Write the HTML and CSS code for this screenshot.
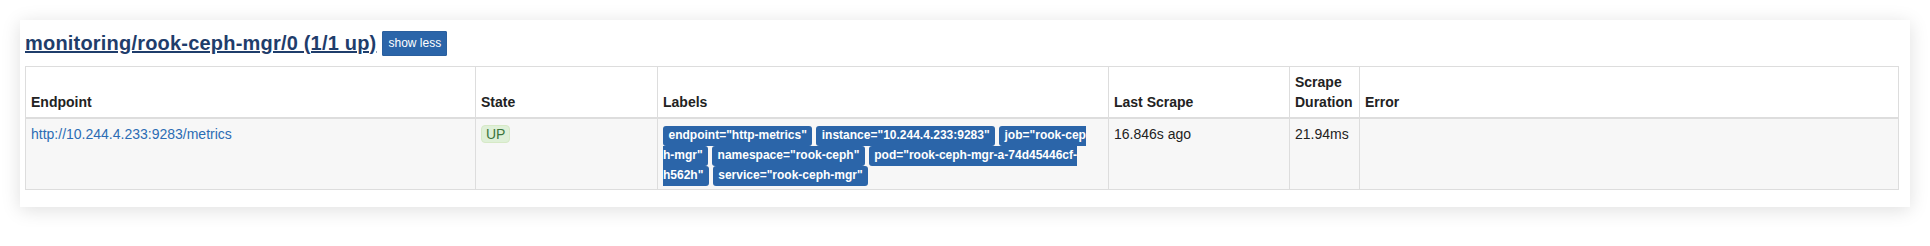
FILE: index.html
```html
<!DOCTYPE html>
<html lang="en">
<head>
    <meta charset="UTF-8">
    <title>Targets</title>
    <link rel="stylesheet" href="styles.css">
</head>
<body>
    <div class="job-card">
        <h2 class="job-title">
            <a href="#job-monitoring/rook-ceph-mgr/0" class="job-link">monitoring/rook-ceph-mgr/0 (1/1 up)</a>
            <button class="btn-toggle">show less</button>
        </h2>
        <table class="targets">
            <colgroup>
                <col class="col-endpoint">
                <col class="col-state">
                <col class="col-labels">
                <col class="col-scrape">
                <col class="col-duration">
                <col>
            </colgroup>
            <thead>
                <tr>
                    <th>Endpoint</th>
                    <th>State</th>
                    <th>Labels</th>
                    <th>Last Scrape</th>
                    <th>Scrape Duration</th>
                    <th>Error</th>
                </tr>
            </thead>
            <tbody>
                <tr>
                    <td><a href="#" class="endpoint">http://10.244.4.233:9283/metrics</a></td>
                    <td><span class="state-up">UP</span></td>
                    <td class="labels">
                        <span class="label">endpoint="http-metrics"</span>
                        <span class="label">instance="10.244.4.233:9283"</span>
                        <span class="label">job="rook-ceph-mgr"</span>
                        <span class="label">namespace="rook-ceph"</span>
                        <span class="label">pod="rook-ceph-mgr-a-74d45446cf-<br>h562h"</span>
                        <span class="label">service="rook-ceph-mgr"</span>
                    </td>
                    <td>16.846s ago</td>
                    <td>21.94ms</td>
                    <td></td>
                </tr>
            </tbody>
        </table>
    </div>
</body>
</html>
```

FILE: styles.css
```css
body {
    margin: 0;
    background-color: #fff;
    font-family: "Liberation Sans", Arial, Helvetica, sans-serif;
    font-size: 14px;
    line-height: 20px;
    color: #222;
}
.job-card {
    margin: 20px;
    padding: 10px 11px 17px 5px;
    background-color: #fff;
    box-shadow: 0 3px 18px rgba(0,0,0,0.13);
}
.job-title {
    display: flex;
    align-items: center;
    gap: 6px;
    margin: 0 0 10px 0;
    height: 26px;
    font-size: 20px;
    line-height: 26px;
}
.job-link {
    color: #1f3d6b;
    text-decoration: underline;
    letter-spacing: 0.2px;
}
.btn-toggle {
    padding: 3px 5px;
    font-family: "Liberation Sans", Arial, sans-serif;
    font-size: 12px;
    line-height: 17px;
    color: #fff;
    background-color: #2b65a9;
    border: 1px solid #2a5f9e;
    border-radius: 1px;
}
.targets {
    width: 100%;
    table-layout: fixed;
    border-collapse: collapse;
}
.col-endpoint { width: 450px; }
.col-state { width: 182px; }
.col-labels { width: 451px; }
.col-scrape { width: 181px; }
.col-duration { width: 70px; }
.targets th,
.targets td {
    padding: 5px;
    border: 1px solid #ddd;
    text-align: left;
    vertical-align: top;
}
.targets th {
    vertical-align: bottom;
    border-bottom: 2px solid #ddd;
    font-weight: bold;
}
.targets tbody tr {
    background-color: #f7f7f7;
}
.endpoint {
    color: #2b6cb4;
    text-decoration: none;
}
.state-up {
    display: inline-block;
    padding: 0 4px;
    line-height: 16px;
    color: #3c763d;
    background-color: #dff0d8;
    border: 1px solid #d6e9c6;
    border-radius: 4px;
}
.targets td.labels {
    padding-right: 22px;
    word-break: break-all;
}
.label {
    padding: .2em 5.5px .3em;
    font-size: 12px;
    font-weight: bold;
    line-height: 1;
    color: #fff;
    background-color: #2b65a9;
    border-radius: .25em;
}
```
